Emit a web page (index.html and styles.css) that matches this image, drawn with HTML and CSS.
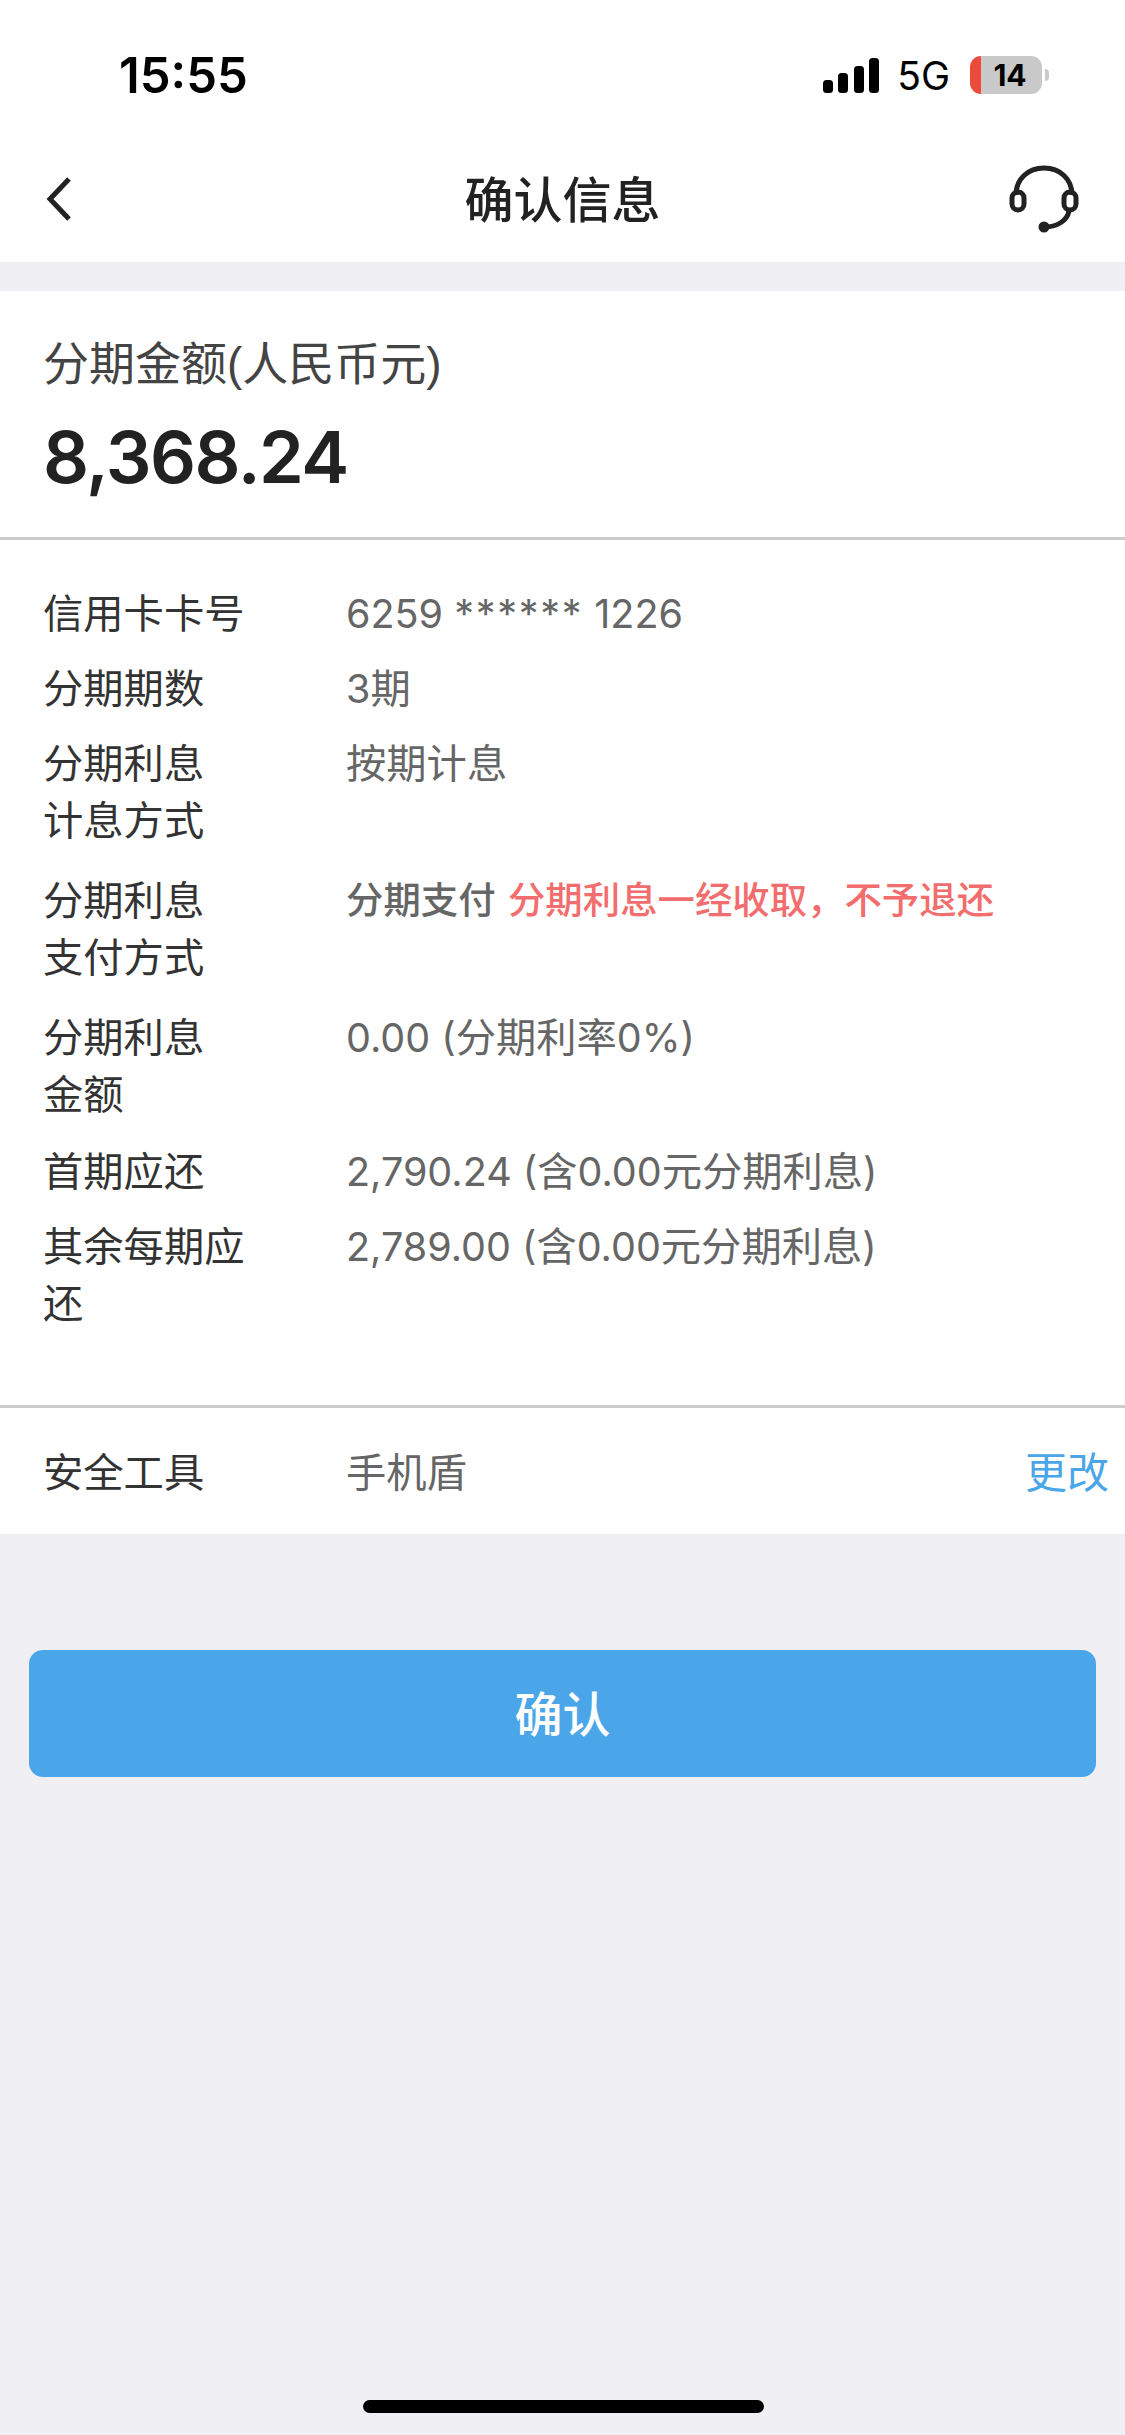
FILE: index.html
```html
<!DOCTYPE html>
<html lang="zh-CN">
<head>
    <meta charset="utf-8">
    <title>确认信息</title>
    <link rel="stylesheet" href="styles.css">
</head>
<body>
    <div class="status-bar">
        <span class="time">15:55</span>
        <div class="status-right">
            <svg class="signal" width="56" height="35" viewBox="0 0 56 35">
                <rect x="0" y="22" width="10" height="13" rx="3.5"/>
                <rect x="15" y="15" width="10" height="20" rx="3.5"/>
                <rect x="31" y="8" width="10" height="27" rx="3.5"/>
                <rect x="46" y="0" width="10" height="35" rx="3.5"/>
            </svg>
            <span class="net">5G</span>
            <div class="battery"><span>14</span></div>
            <span class="battery-nub"></span>
        </div>
    </div>

    <div class="nav">
        <svg class="back" width="26" height="44" viewBox="0 0 26 44">
            <path d="M23 2 L4 22 L23 42"/>
        </svg>
        <h1>确认信息</h1>
        <svg class="service" width="70" height="68" viewBox="0 0 70 68">
            <path d="M7 30 C7 14 19 3 35 3 C51 3 63 14 63 30"/>
            <rect x="3" y="27" width="12" height="18" rx="6"/>
            <rect x="55" y="27" width="12" height="18" rx="6"/>
            <path d="M60 46 C58 56 48 62 35 62"/>
            <circle class="mic" cx="35" cy="62" r="5.5"/>
        </svg>
    </div>

    <div class="amount-card">
        <p class="amount-label">分期金额(人民币元)</p>
        <p class="amount">8,368.24</p>
    </div>

    <div class="info">
        <div class="info-row">
            <div class="info-label">信用卡卡号</div>
            <div class="info-value"><span class="num">6259 <span class="stars">******</span> 1226</span></div>
        </div>
        <div class="info-row">
            <div class="info-label">分期期数</div>
            <div class="info-value"><span class="num">3</span>期</div>
        </div>
        <div class="info-row tall">
            <div class="info-label">分期利息<br>计息方式</div>
            <div class="info-value">按期计息</div>
        </div>
        <div class="info-row tall">
            <div class="info-label">分期利息<br>支付方式</div>
            <div class="info-value small">分期支付 <span class="warn">分期利息一经收取，不予退还</span></div>
        </div>
        <div class="info-row tall last-tall">
            <div class="info-label">分期利息<br>金额</div>
            <div class="info-value"><span class="num">0.00 (</span>分期利率<span class="num">0%)</span></div>
        </div>
        <div class="info-row">
            <div class="info-label">首期应还</div>
            <div class="info-value"><span class="num">2,790.24 (</span>含<span class="num">0.00</span>元分期利息<span class="num">)</span></div>
        </div>
        <div class="info-row">
            <div class="info-label">其余每期应还</div>
            <div class="info-value"><span class="num">2,789.00 (</span>含<span class="num">0.00</span>元分期利息<span class="num">)</span></div>
        </div>
    </div>

    <div class="tool-row">
        <div class="info-label">安全工具</div>
        <div class="info-value">手机盾</div>
        <a class="change" href="#">更改</a>
    </div>

    <button class="confirm" type="button">确认</button>

    <div class="home-bar"></div>
</body>
</html>
```

FILE: styles.css
```css
html, body {
    margin: 0;
    padding: 0;
}

body {
    display: flex;
    flex-direction: column;
    min-height: 2435px;
    background-color: #efeff4;
    font-family: "Liberation Sans", "Noto Sans CJK SC", sans-serif;
    font-size: 40.3px;
    color: #333;
}

p, h1 {
    margin: 0;
}

.status-bar {
    display: flex;
    align-items: center;
    justify-content: space-between;
    box-sizing: border-box;
    height: 136px;
    padding: 14px 76px 0 119px;
    background-color: #fff;
    color: #000;
    font-family: Inter, sans-serif;
}

.time {
    font-size: 49px;
    font-weight: 600;
}

.status-right {
    display: flex;
    align-items: center;
}

.signal {
    margin-right: 18px;
}

.signal rect {
    fill: #000;
}

.net {
    margin-right: 20px;
    font-size: 39px;
}

.battery {
    width: 72px;
    height: 38px;
    border-radius: 11px;
    background: linear-gradient(90deg, #ec4b3c 11px, #c9c9c9 11px);
    text-align: center;
    font-size: 30px;
    font-weight: 700;
    line-height: 38px;
}

.battery span {
    padding-left: 8px;
}

.battery-nub {
    width: 4px;
    height: 12px;
    margin-left: 3px;
    border-radius: 0 6px 6px 0;
    background-color: #c9c9c9;
}

.nav {
    display: grid;
    grid-template-columns: 1fr auto 1fr;
    align-items: center;
    box-sizing: border-box;
    height: 126px;
    padding: 0 46px;
    background-color: #fff;
}

.nav h1 {
    padding-bottom: 6px;
    font-size: 49px;
    font-weight: 500;
    color: #222;
}

.service {
    justify-self: end;
}

.back path,
.service path,
.service rect {
    fill: none;
    stroke: #222;
    stroke-width: 5;
}

.service .mic {
    fill: #222;
}

.amount-card {
    margin-top: 29px;
    padding: 41px 43px 0;
    height: 205px;
    background-color: #fff;
    border-bottom: 3px solid #ccc;
}

.amount-label {
    font-size: 46px;
    line-height: 64px;
    color: #444;
}

.amount {
    margin-top: 18px;
    font-family: Inter, sans-serif;
    font-size: 72px;
    font-weight: 600;
    letter-spacing: -1.5px;
    line-height: 86px;
    color: #222;
}

.info {
    display: flex;
    flex-direction: column;
    gap: 18px;
    padding: 46px 0 72px 43px;
    background-color: #fff;
    border-bottom: 3px solid #ccc;
}

.info-row {
    display: grid;
    grid-template-columns: 210px 1fr;
    column-gap: 93px;
    line-height: 57px;
}

.info-row.tall {
    margin-bottom: 5px;
}

.info-row.last-tall {
    margin-bottom: 2px;
}

.info-value {
    color: #666;
}

.info-value.small {
    font-size: 37.4px;
    font-weight: 500;
}

.num {
    font-family: Inter, sans-serif;
    font-size: 39.5px;
    line-height: 1;
}

.stars {
    letter-spacing: 1.7px;
}

.warn {
    margin-left: 2px;
    color: #f26d6d;
}

.tool-row {
    display: grid;
    grid-template-columns: 210px 1fr auto;
    column-gap: 93px;
    align-items: center;
    box-sizing: border-box;
    height: 126px;
    padding: 0 16px 3px 43px;
    background-color: #fff;
}

.change {
    font-size: 42px;
    color: #4ba6e9;
    text-decoration: none;
}

.confirm {
    display: block;
    width: 1067px;
    height: 127px;
    margin: 116px 0 0 29px;
    padding: 0 0 6px;
    border: none;
    border-radius: 14px;
    background-color: #4ba6e9;
    color: #fff;
    font-family: "Liberation Sans", "Noto Sans CJK SC", sans-serif;
    font-size: 48px;
    font-weight: 500;
}

.home-bar {
    width: 401px;
    height: 13px;
    margin: auto 0 22px 363px;
    border-radius: 7px;
    background-color: #000;
}
```
